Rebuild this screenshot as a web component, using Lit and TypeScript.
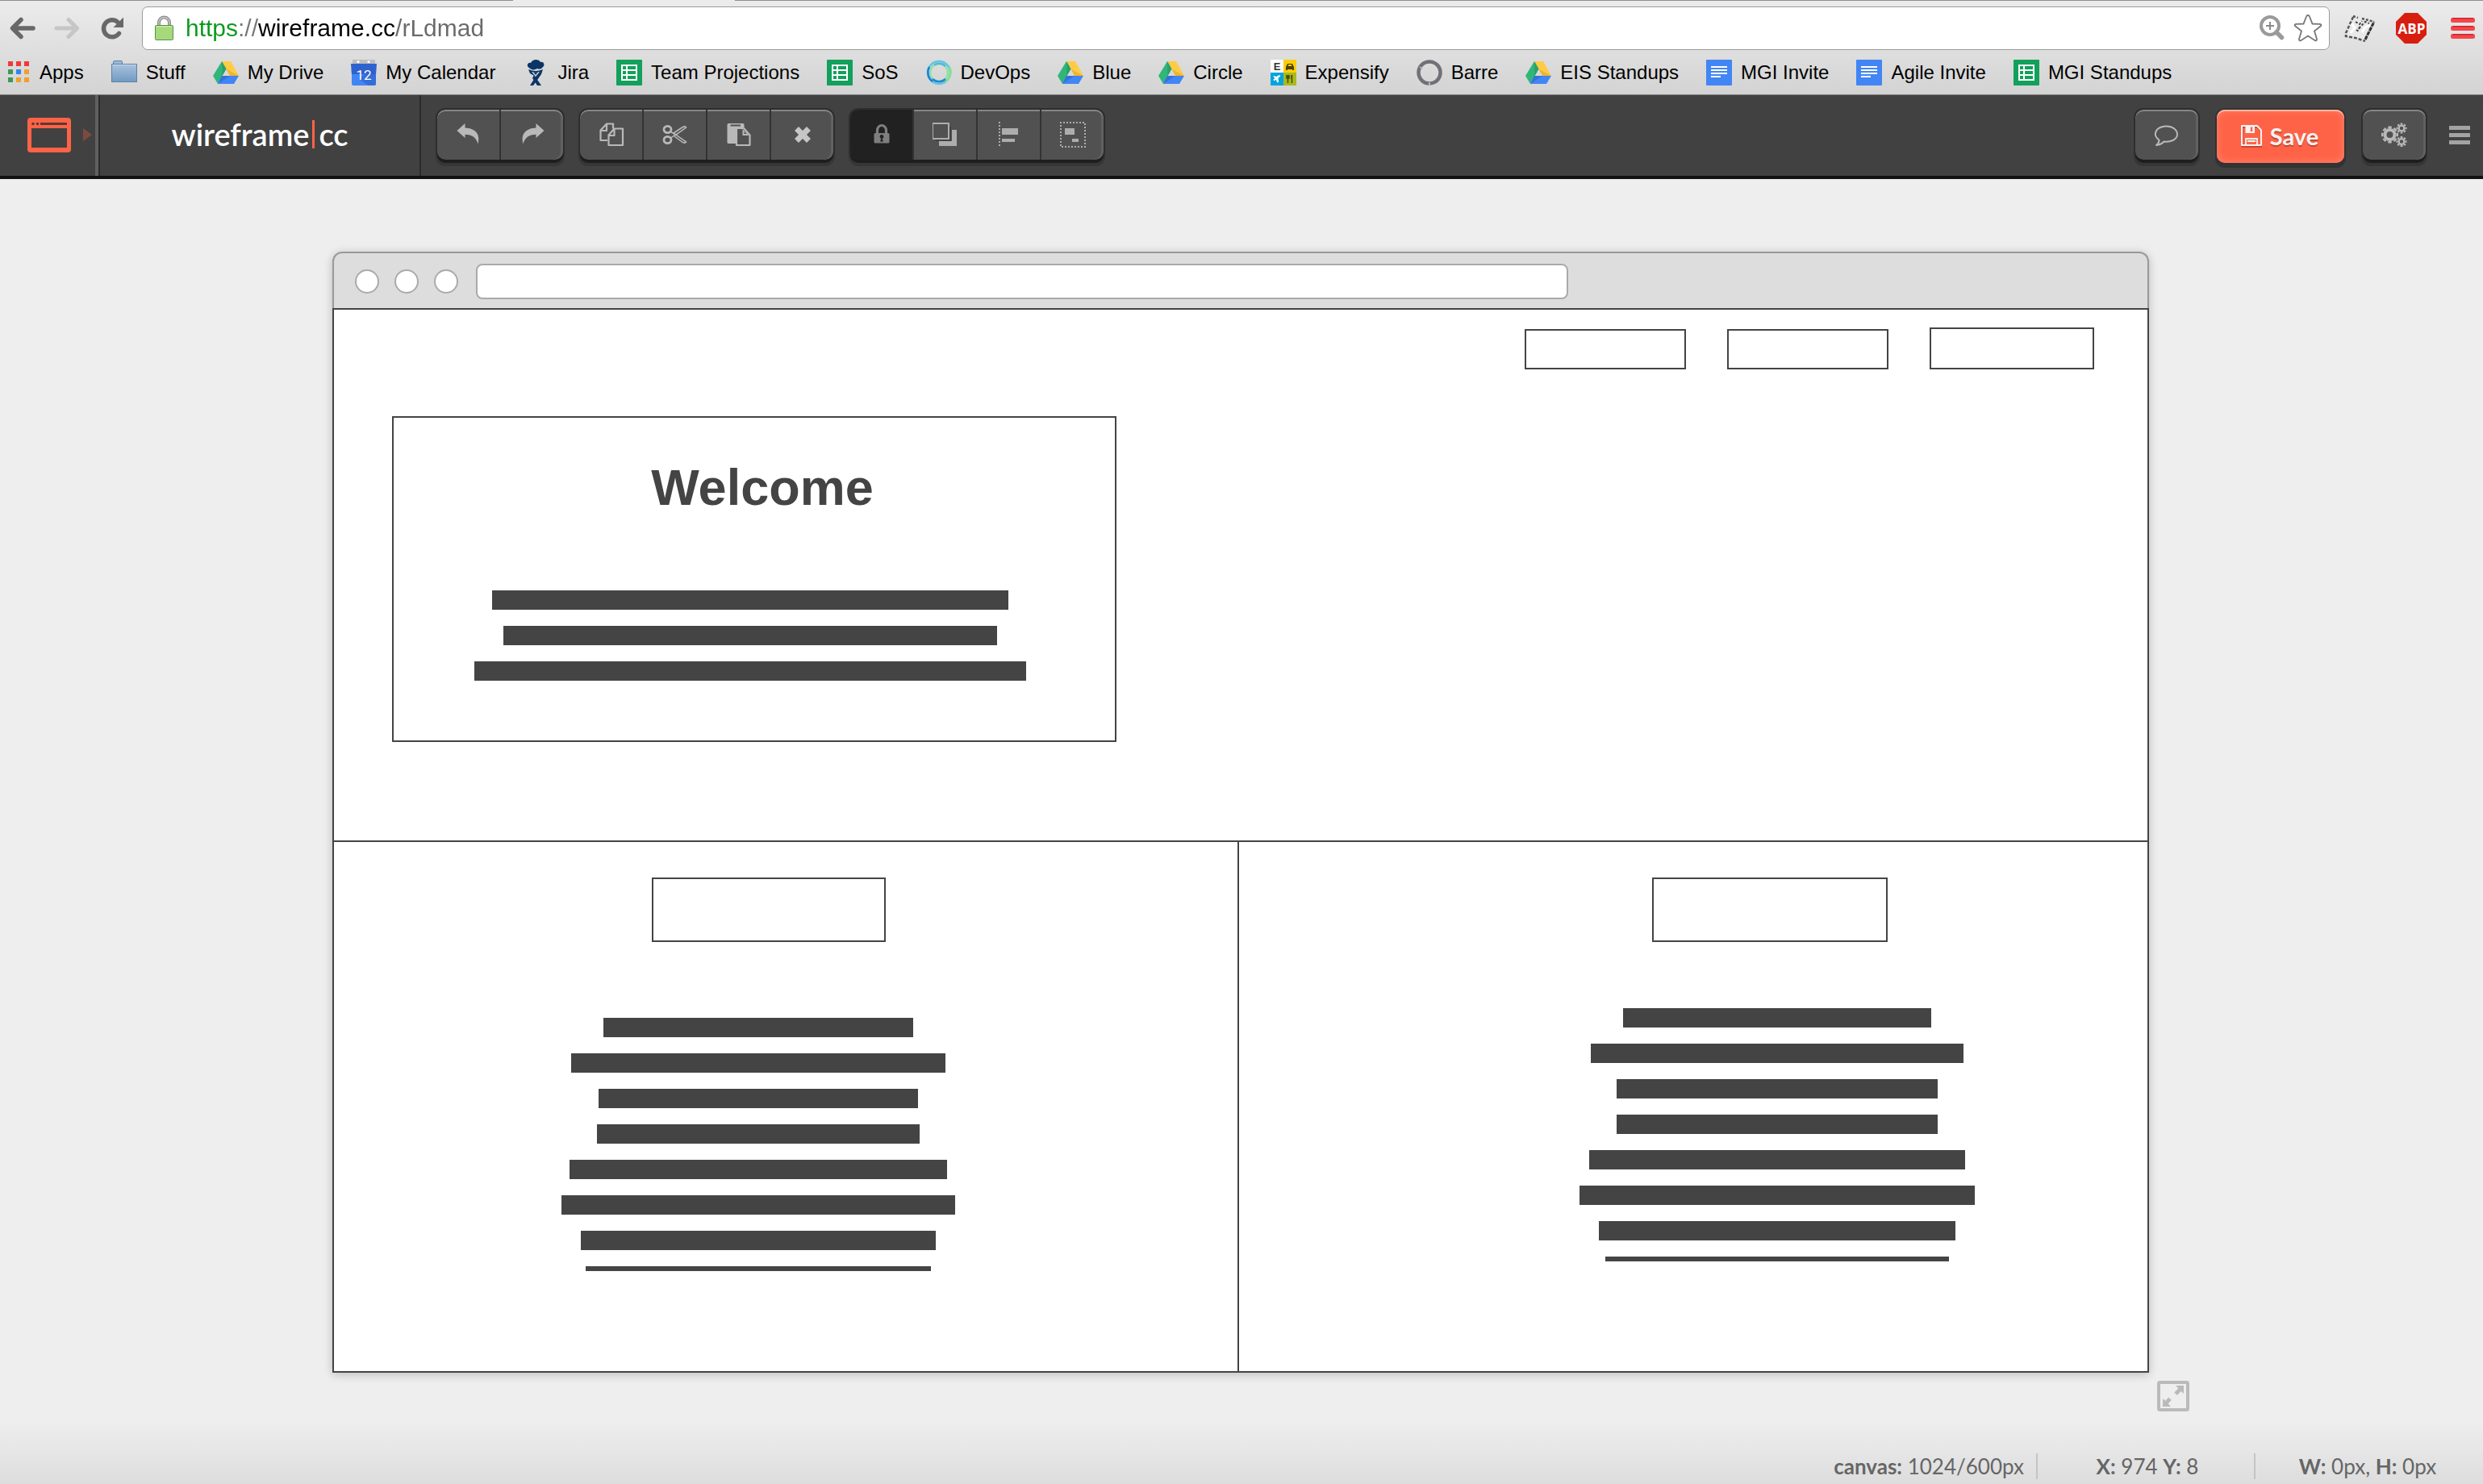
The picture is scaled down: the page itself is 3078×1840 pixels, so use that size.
import { LitElement, html, css, svg, type TemplateResult } from "lit";
import { customElement } from "lit/decorators.js";

const icon = (body: TemplateResult, w = 32, h = 32) =>
  html`<svg class="icon" width=${w} height=${h} viewBox="0 0 ${w} ${h}" aria-hidden="true">${body}</svg>`;

/* ---------- bookmark icons ---------- */

const appsIcon = () => {
  const colors = ["#f03a37", "#f03a37", "#f03a37", "#3a9b57", "#2f86ee", "#efa12c", "#3a9b57", "#efa12c", "#efa12c"];
  return icon(svg`${colors.map(
    (c, i) => svg`<rect x=${4 + (i % 3) * 10} y=${2 + Math.floor(i / 3) * 10} width="6" height="6" fill=${c}/>`
  )}`);
};

const folderIcon = () => icon(svg`
  <defs><linearGradient id="fold" x1="0" y1="0" x2="0" y2="1"><stop offset="0" stop-color="#a9c3de"/><stop offset="1" stop-color="#7199c2"/></linearGradient></defs>
  <path d="M2.5 5V3q0-1.500 1.500-1.500h8q1.500 0 1.500 1.500v2" fill="#9bb8d6" stroke="#5d85ad"/>
  <rect x=".5" y="5.500" width="31" height="22" fill="url(#fold)" stroke="#5c83aa"/>
  <path d="M1.500 6.500h29" stroke="#c9daea"/>`);

const driveIcon = () => icon(svg`
  <path d="M11 2h11l10 18H21z" fill="#ffcb44"/>
  <path d="M11 2l5.500 9.500L6 30 0 20z" fill="#31b679"/>
  <path d="M11 20h21l-6 10H6z" fill="#4285f4"/>
  <path d="M11 2l5.500 9.500-5 8.500z" fill="#23905c" opacity=".55"/>
  <path d="M21 20l-4.500-8.500 15.500 8.500z" fill="#d79f26" opacity=".5"/>
  <path d="M11 20h10L6 30z" fill="#2a62c4" opacity=".55"/>`);

const calendarIcon = () => icon(svg`
  <rect x="2" y="0" width="28" height="7" fill="#bdbdbd"/>
  <circle cx="9" cy="2.500" r="1.600" fill="#fff"/><circle cx="22" cy="2.500" r="1.600" fill="#fff"/>
  <path d="M0 5h32l-1 14H1z" fill="#2e62cf"/>
  <path d="M1 18h30v12q0 2-2 2H3q-2 0-2-2z" fill="#4285f4"/>
  <path d="M24 12l7 7v11q0 2-2 2h-7L10 24z" fill="#2c5fc6" opacity=".6"/>
  <text x="16" y="25" text-anchor="middle" font-family="Roboto, sans-serif" font-size="17" fill="#fff">12</text>`);

const jiraIcon = () => icon(svg`
  <g fill="#0b3566">
    <path d="M8 10C4 8 6 3 10 4 12-1 20-1 22 3c4-1 6 4 3 6-2 3-5 3-7 2-3 2-8 2-10-1z"/>
    <path d="M7 12q9 4 18 0l-2 6-7 10-3 4H9l7-11-7-4z"/>
    <path d="M14 19l9 13h-5l-6-9z"/>
  </g>
  <path d="M11 15q5 1.500 10 0l-5 6z" fill="#d9d9d9"/>
  <path d="M13 15q3 1 6 0l-3 4z" fill="#0b3566"/>`);

const sheetIcon = () => icon(svg`
  <rect width="32" height="32" rx="1" fill="#12a05c"/>
  <path d="M7 7h18v18H7zM7 13h18M7 19h18M13 7v18" fill="none" stroke="#fff" stroke-width="2"/>`);

const docIcon = () => icon(svg`
  <rect width="32" height="32" rx="1" fill="#4285f4"/>
  <path d="M6 9h20M6 13h20M6 17h20M6 21h12" stroke="#fff" stroke-width="2"/>`);

const devopsIcon = () => icon(svg`
  <g fill="none" stroke-width="2.500">
    <circle cx="16" cy="16" r="14" stroke="#5fc6e4"/>
    <circle cx="16" cy="16" r="11" stroke="#8fe0a8"/>
    <path d="M4 9A14 14 0 0 0 8 27" stroke="#1d7fdc"/>
    <path d="M29 9a14 14 0 0 1-5 18" stroke="#86e08a"/>
    <path d="M8 24a11.500 11.500 0 0 0 16 0" stroke="#2387cf"/>
    <path d="M10 6.500a11.500 11.500 0 0 1 14 1.500" stroke="#55b6de"/>
  </g>`);

const barreIcon = () => icon(svg`
  <circle cx="16" cy="16" r="13.500" fill="none" stroke="#6f7177" stroke-width="4.500"/>
  <path d="M16 28v4M4 9l3 2" stroke="#b4b4b6" stroke-width="2"/>`);

const expensifyIcon = () => icon(svg`
  <rect width="16" height="16" fill="#fff"/><rect x="16" width="16" height="16" fill="#fbce07"/>
  <rect y="16" width="16" height="16" fill="#03a4dc"/><rect x="16" y="16" width="16" height="16" fill="#aab91e"/>
  <text x="8" y="13" text-anchor="middle" font-family="Liberation Sans, sans-serif" font-weight="700" font-size="13" fill="#333">E</text>
  <path d="M19 9l2-4h6l2 4v4h-2v-1h-6v1h-2z" fill="#4d4100"/><path d="M21.500 8h5L25.500 6h-3z" fill="#fbce07"/>
  <path d="M4 20l3 1 4-2 1.500 1-3 3 .5 5-1.500.5-2-4-2 2-1-2 2-1.500-2-2z" fill="#fff"/>
  <path d="M21.500 19v10M26.500 19v10M20 19v4h3v-4M26 19v5" stroke="#454d08" stroke-width="1.500" fill="none"/>`);

const bookmarks: { label: string; draw: () => TemplateResult }[] = [
  { label: "Apps", draw: appsIcon },
  { label: "Stuff", draw: folderIcon },
  { label: "My Drive", draw: driveIcon },
  { label: "My Calendar", draw: calendarIcon },
  { label: "Jira", draw: jiraIcon },
  { label: "Team Projections", draw: sheetIcon },
  { label: "SoS", draw: sheetIcon },
  { label: "DevOps", draw: devopsIcon },
  { label: "Blue", draw: driveIcon },
  { label: "Circle", draw: driveIcon },
  { label: "Expensify", draw: expensifyIcon },
  { label: "Barre", draw: barreIcon },
  { label: "EIS Standups", draw: driveIcon },
  { label: "MGI Invite", draw: docIcon },
  { label: "Agile Invite", draw: docIcon },
  { label: "MGI Standups", draw: sheetIcon },
];

/* ---------- browser icons ---------- */

const backIcon = () => icon(svg`<path d="M29 16H5M14 5.500L3.500 16 14 26.500" fill="none" stroke="#686868" stroke-width="5.500" stroke-linecap="round" stroke-linejoin="round"/>`);
const forwardIcon = () => icon(svg`<path d="M3 16h24M18 5.500L28.500 16 18 26.500" fill="none" stroke="#c6c6c6" stroke-width="5" stroke-linecap="round" stroke-linejoin="round"/>`);
const reloadIcon = () => icon(svg`
  <path d="M25.500 22.500A10.500 10.500 0 1 1 24 8.500" fill="none" stroke="#686868" stroke-width="5.500" stroke-linecap="round"/>
  <path d="M31 2.500V15H18.500z" fill="#686868"/>`);
const padlockIcon = () => icon(svg`
  <path d="M6 14V9a6.500 6.500 0 0 1 13 0v5" fill="none" stroke="#8a8a8a" stroke-width="4"/>
  <path d="M6 14V9a6.500 6.500 0 0 1 13 0v5" fill="none" stroke="#c9c9c9" stroke-width="1.500"/>
  <rect x="1.500" y="12.500" width="22" height="18" rx="1" fill="#a5d97c" stroke="#559343"/>
  <path d="M3 14h19" stroke="#c4eca2" stroke-width="1.500"/>`, 26, 32);
const magnifierIcon = () => icon(svg`
  <circle cx="13" cy="13" r="11" fill="none" stroke="#9a9a9a" stroke-width="4"/>
  <path d="M13 8v10M8 13h10" stroke="#8a8a8a" stroke-width="2"/>
  <path d="M21 21l6.500 6.500" stroke="#9a9a9a" stroke-width="5.500" stroke-linecap="round"/>`);
const starIcon = () => icon(svg`
  <path d="M18 2q1.500 0 2 1.500l3.500 9 9.500.3q2.500.7.8 2.500L26 21.500l3 10q0 2.500-2.200 1.700L18 27.500l-8.800 5.700Q7 34 7 31.500l3-10-7.800-6.200Q.5 13.500 3 12.800l9.500-.3 3.500-9Q16.500 2 18 2z" fill="#fff" stroke="#777" stroke-width="1.800"/>`, 36, 36);
const paperIcon = () => icon(svg`
  <path d="M12 2l16 4 10 3-12 24-12-5L1 26z" fill="#e9e9e9"/>
  <path d="M11 3L2 23v4l12 2 12 4" fill="none" stroke="#555" stroke-width="2.500" stroke-dasharray="4 2"/>
  <path d="M11 2l6 2M22 5l15 4" fill="none" stroke="#555" stroke-width="2.500" stroke-dasharray="3 2"/>
  <path d="M26 31L37 9" stroke="#333" stroke-width="3" stroke-dasharray="5 1"/>
  <path d="M14 9l5 3 3-4M20 16l-4 3M18 17l8-8 5 2M15 19l3 2" fill="none" stroke="#444" stroke-width="2" stroke-dasharray="3 2"/>
  <path d="M9 11l4 5-5 7M22 22l4-6 6-3" fill="none" stroke="#fff" stroke-width="3"/>`, 38, 34);
const abpIcon = () => icon(svg`
  <path d="M11 0h16l11 11v16L27 38H11L0 27V11z" fill="#d81e10"/>
  <text x="19.500" y="25.500" text-anchor="middle" font-family="Open Sans, sans-serif" font-weight="700" font-size="17" fill="#fff">ABP</text>`, 38, 38);
const redMenuIcon = () => icon(svg`
  ${[0, 10, 20].map((y) => svg`<rect x="4" y=${y} width="30" height="6" rx="2.500" fill="#f2474b"/><path d="M6 ${y + 0.7}h26" stroke="#d02028" stroke-width="1.400"/>`)}`, 38, 26);

/* ---------- editor icons ---------- */

const G = "#b9b9b9";

const windowIcon = () => icon(svg`
  <path d="M4 0h46q4 0 4 4v35q0 4-4 4H4q-4 0-4-4V4q0-4 4-4zM5 13v24h44V13z" fill="#ff6347" fill-rule="evenodd"/>
  <circle cx="7" cy="7.500" r="1.800" fill="#5a3a34"/><circle cx="12.500" cy="7.500" r="1.800" fill="#5a3a34"/>
  <rect x="16" y="6" width="33" height="3" fill="#5a3a34"/>`, 54, 43);
const undoIcon = () => icon(svg`<path d="M1.500 11L11.500 2v5.500C23 8 31 14 27.500 27.500 25.500 20 20.500 16 11.500 15.800V20z" fill=${G}/>`);
const redoIcon = () => icon(svg`<path d="M30.500 11L20.500 2v5.500C9 8 1 14 4.500 27.500 6.500 20 11.500 16 20.500 15.800V20z" fill=${G}/>`);
const copyIcon = () => icon(svg`
  <g fill="none" stroke=${G} stroke-width="2.200" stroke-linejoin="round">
    <path d="M11 23H2.500V10.500L10 2.500h8v6M10 3v8H3"/>
    <path d="M12.500 16.500l7-8h10.500V29H12.500zM19.500 9v8h-7" fill="#515151"/>
  </g>`);
const cutIcon = () => icon(svg`
  <g fill="none" stroke=${G}>
    <ellipse cx="6.500" cy="9.500" rx="4.500" ry="4.200" stroke-width="2.800"/>
    <ellipse cx="6.500" cy="22.500" rx="4.500" ry="4.200" stroke-width="2.800"/>
    <path d="M10.500 12.500L17 16l12.500-9q-1.500-2-4-.5L14 14M10.500 20l6-4 13 9q-1.500 2-4 .5L15 18" stroke-width="1.500"/>
  </g>
  <circle cx="16" cy="16" r="1.300" fill=${G}/>`);
const pasteIcon = () => icon(svg`
  <path d="M3 2h18q1.500 0 1.500 1.500V7L13 9v18H3q-1.500 0-1.500-1.500v-22Q1.500 2 3 2z" fill=${G}/>
  <path d="M5.500 4.500h12.500" stroke="#515151" stroke-width="2"/>
  <path d="M13 8h9l7.500 8.500V29H13z" fill="#515151" stroke=${G} stroke-width="2.200" stroke-linejoin="round"/>
  <path d="M20.500 9v8h8z" fill=${G}/><path d="M22.500 12v3h3z" fill="#515151"/>`);
const removeIcon = () => icon(svg`<path d="M8.500 8.500l15 15M23.500 8.500l-15 15" stroke="#c6c6c6" stroke-width="7"/>`);
const lockIcon = () => icon(svg`
  <path d="M10.500 15v-4.500a5.500 6 0 0 1 11 0V15" fill="none" stroke="#7e7e7e" stroke-width="3.200"/>
  <rect x="6.500" y="14" width="19" height="12.500" rx="1.500" fill="#7e7e7e"/>
  <circle cx="16" cy="18.500" r="2.400" fill="#222"/><path d="M16 19l2 5.500h-4z" fill="#222"/>`);
const layersIcon = () => icon(svg`
  <path d="M24 10h6v20H8v-6h16z" fill="#adadad"/>
  <path d="M4 6h19v18H4z" fill="#333" opacity=".5"/>
  <rect x="0" y="2" width="20" height="19" fill="#515151" stroke="#adadad" stroke-width="2"/>`);
const alignIcon = () => icon(svg`
  <path d="M4 0v32" stroke="#adadad" stroke-width="2" stroke-dasharray="2 2"/>
  <rect x="7" y="8" width="20" height="8" fill="#adadad"/><rect x="7" y="21" width="16" height="4" fill="#adadad"/>`);
const groupIcon = () => icon(svg`
  <path d="M1 1h30v30H1z" fill="none" stroke="#adadad" stroke-width="2" stroke-dasharray="2 2" stroke-dashoffset="1"/>
  <rect x="6" y="8" width="12" height="8" fill="#adadad"/><rect x="15" y="21" width="8" height="4" fill="#adadad"/>`);
const commentIcon = () => icon(svg`
  <path d="M6.500 22.500C-1.500 17 1 6.500 14.500 5.500 23 5 29 10 29 15.500c0 7-9 10-16.500 9-2.500 3-5.500 4-9.500 4.500 2-1.500 3.500-4 3.500-6.500z" fill="none" stroke=${G} stroke-width="2" stroke-linejoin="round"/>`);
const saveIcon = () => icon(svg`
  <path d="M1.500 2.500H20l5 5V27H1.500z" fill="none" stroke="#c8452f" stroke-width="2"/>
  <path d="M1 1h19l5 5.500V25H1z" fill="none" stroke="#f3f3f3" stroke-width="2" stroke-linejoin="round"/>
  <path d="M5.500 1H17v9H5.500z" fill="#f3f3f3"/><path d="M13 2.500v5.500" stroke="#ff6347" stroke-width="2.500"/>
  <path d="M6 25v-8h14v8M8 20h10" fill="none" stroke="#f3f3f3" stroke-width="1.800"/>`, 27, 28);

const gear = (cx: number, cy: number, r: number, hole: number, rim: number, teeth: number) => {
  const spokes = Array.from({ length: teeth }, (_, i) => {
    const a = (i * 2 * Math.PI) / teeth;
    return `M${cx + rim * Math.cos(a)} ${cy + rim * Math.sin(a)}L${cx + r * Math.cos(a)} ${cy + r * Math.sin(a)}`;
  }).join("");
  return svg`<circle cx=${cx} cy=${cy} r=${(rim + hole) / 2} fill="none" stroke=${G} stroke-width=${rim - hole}/>
    <path d=${spokes} stroke=${G} stroke-width=${r * 0.42}/>`;
};
const gearsIcon = () => icon(svg`${gear(10.5, 16, 10.5, 4, 8, 8)}${gear(25, 8, 6.5, 2.2, 4.6, 8)}${gear(25, 24.5, 6.5, 2.2, 4.6, 8)}`);
const menuIcon = () => icon(svg`<path d="M0 2.500h26M0 11.500h26M0 20.500h26" stroke="#a3a3a3" stroke-width="5"/>`, 26, 23);
const expandIcon = () => icon(svg`
  <rect x="2" y="2" width="36" height="34" rx="1.500" fill="none" stroke="#bababa" stroke-width="4"/>
  <path d="M23 6h10v10l-3.200-3-5 5-3.500-3.500 5-5zM17 32H7V22l3.200 3 4-4.500 3.500 3.500-4 4.500z" fill="#bababa"/>`, 40, 38);

interface Tool { label: string; draw: () => TemplateResult; active?: boolean }

const toolGroups: Tool[][] = [
  [{ label: "Undo", draw: undoIcon }, { label: "Redo", draw: redoIcon }],
  [
    { label: "Copy", draw: copyIcon },
    { label: "Cut", draw: cutIcon },
    { label: "Paste", draw: pasteIcon },
    { label: "Delete", draw: removeIcon },
  ],
  [
    { label: "Lock", draw: lockIcon, active: true },
    { label: "Order", draw: layersIcon },
    { label: "Align", draw: alignIcon },
    { label: "Group", draw: groupIcon },
  ],
];

/* Widths of the text placeholder lines in each wireframe block. */
const heroLines = [640, 612, 684];
const leftLines = [384, 464, 396, 400, 468, 488, 440, 428];
const rightLines = [382, 462, 398, 398, 466, 490, 442, 426];

@customElement("wire-lines")
class WireLines extends LitElement {
  static properties = { lines: { attribute: false }, clipped: { type: Boolean } };
  declare lines: number[];
  declare clipped: boolean;

  static styles = css`
    :host { display: flex; flex-direction: column; align-items: center; gap: 20px; }
    .line { height: 24px; background: #444; }
    .clipped { height: 6px; }
  `;

  render() {
    return this.lines.map((w, i) => {
      const last = this.clipped && i === this.lines.length - 1;
      return html`<div class=${last ? "line clipped" : "line"} style="width:${w}px"></div>`;
    });
  }
}

@customElement("browser-chrome")
class BrowserChrome extends LitElement {
  static styles = css`
    :host {
      display: block;
      background: linear-gradient(#ececec, #d3d3d3);
      border-bottom: 1px solid #7b7b7b;
      font-family: "Liberation Sans", Arial, sans-serif;
    }
    .tab-edge { display: flex; height: 1px; }
    .tab-edge span { background: #8f8d8f; }
    .tab-before { width: 636px; }
    .tab-edge .tab-open { width: 275px; background: none; }
    .tab-after { flex: 1; }
    .icon { display: block; flex: none; }
    button { display: block; padding: 0; border: 0; background: none; cursor: pointer; }
    .row { display: flex; align-items: center; padding: 7px 6px 0 12px; }
    .history { display: flex; gap: 23px; }
    .omnibox {
      flex: 1;
      display: flex;
      align-items: center;
      box-sizing: border-box;
      height: 54px;
      min-width: 0;
      margin: 0 18px 0 22px;
      padding: 0 8px 0 14px;
      border: 1px solid #9b9b9b;
      border-radius: 7px;
      background: #fff;
    }
    .url {
      flex: 1;
      min-width: 0;
      margin: 0 12px 0 13px;
      padding: 0;
      border: 0;
      outline: 0;
      font: 30px/40px "Liberation Sans", Arial, sans-serif;
      color: #666;
      background: linear-gradient(90deg, #0a9a1c 65px, #777 65px 90px, #000 90px 260px, #6a6a6a 260px);
      -webkit-background-clip: text;
      background-clip: text;
      -webkit-text-fill-color: transparent;
    }
    .omni-actions { display: flex; align-items: center; gap: 10px; }
    .extensions { display: flex; align-items: center; gap: 26px; }
    .bookmarks { display: flex; gap: 34px; padding: 12px 6px 11px; overflow: hidden; }
    .bookmark {
      display: flex;
      gap: 11px;
      flex: none;
      font-size: 24px;
      line-height: 32px;
      color: #000;
      text-decoration: none;
      white-space: nowrap;
    }
  `;

  render() {
    return html`
      <div class="tab-edge"><span class="tab-before"></span><span class="tab-open"></span><span class="tab-after"></span></div>
      <div class="row">
        <div class="history">
          <button aria-label="Back">${backIcon()}</button>
          <button aria-label="Forward">${forwardIcon()}</button>
          <button aria-label="Reload">${reloadIcon()}</button>
        </div>
        <div class="omnibox">
          ${padlockIcon()}
          <input class="url" type="text" aria-label="Address" value="https://wireframe.cc/rLdmad" spellcheck="false" />
          <div class="omni-actions">
            <button aria-label="Zoom">${magnifierIcon()}</button>
            <button aria-label="Bookmark this page">${starIcon()}</button>
          </div>
        </div>
        <div class="extensions">
          <button aria-label="Notes extension">${paperIcon()}</button>
          <button aria-label="Ad blocker">${abpIcon()}</button>
          <button aria-label="Browser menu">${redMenuIcon()}</button>
        </div>
      </div>
      <nav class="bookmarks" aria-label="Bookmarks">
        ${bookmarks.map((b) => html`<a class="bookmark" href="#">${b.draw()}<span>${b.label}</span></a>`)}
      </nav>
    `;
  }
}

@customElement("editor-toolbar")
class EditorToolbar extends LitElement {
  static styles = css`
    :host {
      display: flex;
      height: 100px;
      background: #414141;
      border-bottom: 4px solid #121212;
      font-family: Lato, sans-serif;
    }
    .icon { display: block; flex: none; }
    button { padding: 0; border: 0; background: none; cursor: pointer; font-family: inherit; }
    .picker {
      display: flex;
      align-items: center;
      gap: 15px;
      padding: 0 4px 2px 34px;
      border-right: 4px solid #606060;
    }
    .arrow { border: 8px solid transparent; border-left: 11px solid #7d4a42; border-right: 0; }
    .logo {
      display: flex;
      align-items: center;
      justify-content: center;
      box-sizing: border-box;
      width: 400px;
      padding-bottom: 4px;
      border-left: 2px solid #2b2b2b;
      border-right: 2px solid #2b2b2b;
      font-size: 38px;
      font-weight: 600;
      line-height: 44px;
      color: #fff;
      text-decoration: none;
    }
    .bar { width: 3px; height: 35px; margin: 0 5px 0 4px; background: #ff6347; }
    .tools { display: flex; gap: 21px; padding: 18px 0 0 20px; }
    .actions { display: flex; gap: 23px; padding: 18px 16px 0 0; margin-left: auto; }
    .group {
      display: flex;
      gap: 2px;
      height: 62px;
      border-radius: 10px;
      background: #333;
      box-shadow: 0 4px 0 #1e1e1e, 0 0 0 2px #2e2e2e, 0 6px 0 2px #363636;
      overflow: hidden;
    }
    .tool {
      display: grid;
      place-items: center;
      width: 77px;
      background: #515151;
      box-shadow: inset 0 2px #868686;
    }
    .tool:first-child { border-radius: 10px 0 0 10px; }
    .tool:last-child { border-radius: 0 10px 10px 0; box-shadow: inset 0 2px #868686, inset -3px 0 #616161; }
    .tool:only-child { width: 78px; border-radius: 10px; }
    .tool.active { background: #212121; box-shadow: none; }
    .save {
      display: flex;
      align-items: center;
      justify-content: center;
      gap: 9px;
      width: 158px;
      height: 66px;
      padding-right: 2px;
      border-radius: 10px;
      background: #ff6347;
      box-shadow: inset 0 2px #ffb3a3, inset 0 0 10px #ff8a74, 0 0 0 2px #333, 0 4px 0 2px #333;
      font-size: 29px;
      font-weight: 700;
      line-height: 36px;
      color: #f3f3f3;
      text-shadow: 0 2px #c8452f;
    }
    .menu { height: 62px; margin-left: 6px; }
  `;

  render() {
    return html`
      <button class="picker" aria-label="Choose canvas">${windowIcon()}<span class="arrow"></span></button>
      <a class="logo" href="#"><span>wireframe</span><span class="bar"></span><span>cc</span></a>
      <div class="tools">
        ${toolGroups.map(
          (g) => html`<div class="group">
            ${g.map((t) => html`<button class=${t.active ? "tool active" : "tool"} aria-label=${t.label}>${t.draw()}</button>`)}
          </div>`
        )}
      </div>
      <div class="actions">
        <div class="group"><button class="tool" aria-label="Comments">${commentIcon()}</button></div>
        <button class="save">${saveIcon()}<span>Save</span></button>
        <div class="group"><button class="tool" aria-label="Settings">${gearsIcon()}</button></div>
        <button class="menu" aria-label="Menu">${menuIcon()}</button>
      </div>
    `;
  }
}

@customElement("wire-canvas")
class WireCanvas extends LitElement {
  static styles = css`
    :host {
      display: block;
      border-radius: 12px 12px 0 0;
      box-shadow: 0 2px 12px rgba(0, 0, 0, 0.22);
      font-family: "Liberation Sans", Arial, sans-serif;
    }
    .head {
      display: flex;
      align-items: center;
      gap: 19px;
      height: 68px;
      padding: 2px 0 0 26px;
      box-sizing: border-box;
      height: 70px;
      border: 2px solid #999;
      border-bottom: 0;
      border-radius: 12px 12px 0 0;
      background: #ddd;
    }
    .dot {
      box-sizing: border-box;
      width: 30px;
      height: 30px;
      border: 2px solid #aaa;
      border-radius: 50%;
      background: #fff;
    }
    .address {
      box-sizing: border-box;
      width: 1354px;
      height: 44px;
      margin-left: 3px;
      border: 2px solid #aaa;
      border-radius: 8px;
      background: #fff;
    }
    .page { border: 2px solid #444; background: #fff; }
    .box { box-sizing: border-box; border: 2px solid #444; }
    .hero { height: 658px; border-bottom: 2px solid #444; }
    .nav { display: flex; align-items: flex-end; justify-content: flex-end; gap: 51px; padding: 22px 66px 0 0; }
    .nav .box { width: 200px; height: 50px; }
    .nav .box:last-child { width: 204px; height: 52px; }
    .welcome {
      display: flex;
      flex-direction: column;
      align-items: center;
      width: 898px;
      height: 404px;
      margin: 58px 0 0 72px;
      padding: 50px 10px 0 0;
    }
    .title { margin: 0 0 92px; padding-left: 30px; font-size: 63px; font-weight: 700; line-height: 72px; color: #444; }
    .columns { display: grid; grid-template-columns: 1120fr 1128fr; height: 656px; }
    .column { display: flex; flex-direction: column; align-items: flex-start; gap: 94px; padding: 44px 0 0 282px; }
    .column + .column { gap: 82px; padding-left: 422px; border-left: 2px solid #444; }
    .column .box { width: 290px; height: 80px; margin-left: 112px; }
    .column + .column .box { margin-left: 90px; width: 292px; }
  `;

  render() {
    return html`
      <div class="head">
        <span class="dot"></span><span class="dot"></span><span class="dot"></span>
        <div class="address"></div>
      </div>
      <div class="page">
        <section class="hero">
          <div class="nav"><div class="box"></div><div class="box"></div><div class="box"></div></div>
          <div class="box welcome">
            <h1 class="title">Welcome</h1>
            <wire-lines .lines=${heroLines}></wire-lines>
          </div>
        </section>
        <div class="columns">
          <section class="column"><div class="box"></div><wire-lines clipped .lines=${leftLines}></wire-lines></section>
          <section class="column"><div class="box"></div><wire-lines clipped .lines=${rightLines}></wire-lines></section>
        </div>
      </div>
    `;
  }
}

@customElement("app-root")
class AppRoot extends LitElement {
  static styles = css`
    :host { display: flex; flex-direction: column; min-height: 100vh; background: #eee; }
    .workspace {
      flex: 1;
      display: grid;
      grid-template-columns: minmax(0, 1fr) 414px;
      align-content: start;
      row-gap: 10px;
      padding: 90px 0 0 412px;
    }
    .resize { grid-area: 2 / 2; justify-self: start; margin-left: 10px; padding: 0; border: 0; background: none; cursor: pointer; }
    .icon { display: block; }
    .status {
      display: flex;
      justify-content: flex-end;
      padding: 40px 0 6px;
      background: linear-gradient(#eee, #ddd);
      font: 26px/32px Lato, sans-serif;
      color: #666;
    }
    .cell { box-sizing: border-box; text-align: center; }
    .cell:first-child { padding-right: 15px; }
    .cell + .cell { border-left: 2px solid #c4c4c4; }
    .position { width: 270px; padding-left: 4px; }
    .size { width: 284px; padding-right: 4px; }
  `;

  render() {
    return html`
      <browser-chrome></browser-chrome>
      <editor-toolbar></editor-toolbar>
      <main class="workspace">
        <wire-canvas></wire-canvas>
        <button class="resize" aria-label="Resize canvas">${expandIcon()}</button>
      </main>
      <footer class="status">
        <div class="cell"><b>canvas:</b> 1024/600px</div>
        <div class="cell position"><b>X:</b> 974 <b>Y:</b> 8</div>
        <div class="cell size"><b>W:</b> 0px, <b>H:</b> 0px</div>
      </footer>
    `;
  }
}
